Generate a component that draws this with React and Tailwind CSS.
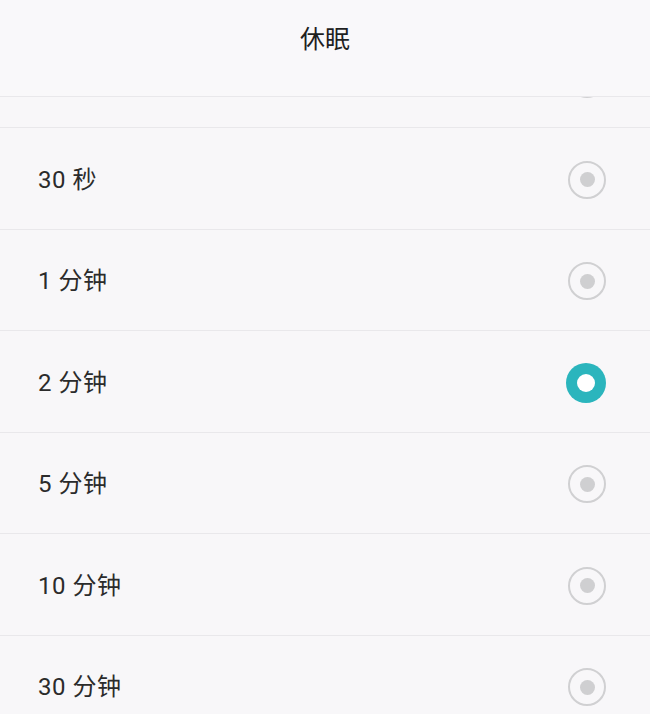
import React from "react";

const options = ["30 秒", "1 分钟", "2 分钟", "5 分钟", "10 分钟", "30 分钟"];

function Radio({ checked }) {
  if (checked) {
    return (
      <div className="w-[40px] h-[40px] rounded-full bg-[#2bb5bd] flex items-center justify-center">
        <div className="w-[18px] h-[18px] rounded-full bg-white" />
      </div>
    );
  }
  return (
    <div className="w-[38px] h-[38px] rounded-full border-2 border-[#d0d0d2] flex items-center justify-center">
      <div className="w-[15px] h-[15px] rounded-full bg-[#cfcfd1]" />
    </div>
  );
}

export default function App() {
  return (
    <div
      className="w-[650px] h-[714px] overflow-hidden bg-[#f8f7f9] text-[#2b2b2b]"
      style={{ fontFamily: 'Roboto, "Noto Sans CJK SC", sans-serif' }}
    >
      {/* Header */}
      <div className="h-[97px] flex items-center justify-center border-b border-[#e9e8eb] bg-[#f9f8fa] pb-[16px]">
        <span className="text-[25px] text-[#1f1f1f]">休眠</span>
      </div>

      {/* Partially scrolled row */}
      <div className="h-[31px] overflow-hidden border-b border-[#e9e8eb]">
        <div className="h-[101px] -mt-[69px] flex items-center justify-end pr-[44px]">
          <Radio />
        </div>
      </div>

      {/* Options */}
      {options.map((label, i) => (
        <div
          key={i}
          className="h-[101.5px] flex items-center justify-between pl-[38px] pr-[44px] pt-[3px] border-b border-[#e9e8eb]"
        >
          <span className="text-[24px] tracking-[0.5px]">{label}</span>
          <Radio checked={label === "2 分钟"} />
        </div>
      ))}
    </div>
  );
}
